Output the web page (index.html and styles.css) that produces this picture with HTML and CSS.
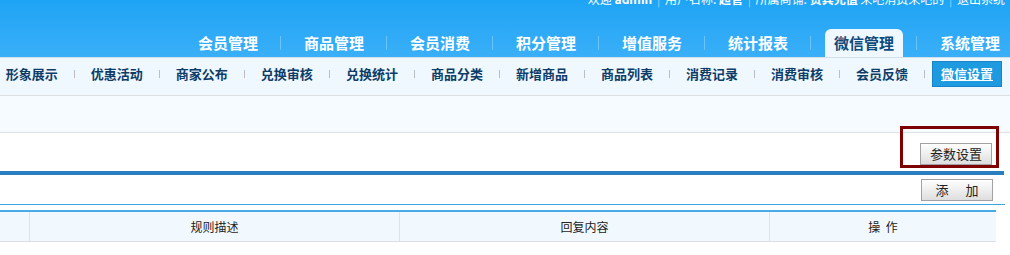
FILE: index.html
```html
<!DOCTYPE html>
<html>
<head>
  <meta charset="utf-8">
  <title>微信设置</title>
  <link rel="stylesheet" href="styles.css">
</head>
<body>
  <div class="header">
    <div class="userbar">
      欢迎 <b>admin</b> <span class="bar">|</span> 用户名称: <b>超管</b> <span class="bar">|</span> 所属商铺: <b>贵宾充值</b> 来吧消费来吧的 <span class="bar">|</span> 退出系统
    </div>
    <ul class="mainnav">
      <li><a href="#">会员管理</a></li>
      <li><a href="#">商品管理</a></li>
      <li><a href="#">会员消费</a></li>
      <li><a href="#">积分管理</a></li>
      <li><a href="#">增值服务</a></li>
      <li><a href="#">统计报表</a></li>
      <li><a href="#" class="current">微信管理</a></li>
      <li><a href="#">系统管理</a></li>
    </ul>
  </div>

  <div class="subnav">
    <ul>
      <li><a href="#">形象展示</a></li>
      <li><a href="#">优惠活动</a></li>
      <li><a href="#">商家公布</a></li>
      <li><a href="#">兑换审核</a></li>
      <li><a href="#">兑换统计</a></li>
      <li><a href="#">商品分类</a></li>
      <li><a href="#">新增商品</a></li>
      <li><a href="#">商品列表</a></li>
      <li><a href="#">消费记录</a></li>
      <li><a href="#">消费审核</a></li>
      <li><a href="#">会员反馈</a></li>
      <li><a href="#" class="current">微信设置</a></li>
    </ul>
  </div>

  <div class="toolbar"></div>

  <div class="main">
    <div class="btn-row first">
      <span class="btn-wrap">
        <button class="btn">参数设置</button>
        <span class="highlight"></span>
      </span>
    </div>
    <div class="blue-bar"></div>

    <div class="btn-row add">
      <button class="btn spaced">添&emsp;加</button>
    </div>

    <table class="list">
      <tr>
        <th class="col-check"></th>
        <th class="col-rule">规则描述</th>
        <th class="col-reply">回复内容</th>
        <th class="col-op">操&nbsp;&nbsp;作</th>
      </tr>
    </table>
  </div>
</body>
</html>
```

FILE: styles.css
```css
body {
  margin: 0;
  padding: 0;
  width: 1010px;
  overflow: hidden;
  background-color: white;
  font-family: "Noto Sans CJK SC", "Liberation Sans", sans-serif;
  color: #222;
}

ul {
  list-style: none;
  margin: 0;
  padding: 0;
}

a {
  text-decoration: none;
}

/* шапка */
.header {
  height: 57px;
  overflow: hidden;
  background: linear-gradient(#1ea4f5, #3aaff8);
}

.userbar {
  height: 12px;
  line-height: 12px;
  margin-top: -7px;
  padding-right: 5px;
  text-align: right;
  font-size: 12px;
  color: white;
  white-space: nowrap;
}

.userbar .bar {
  margin: 0 2px;
  color: #9ad6fb;
}

.mainnav {
  display: flex;
  justify-content: flex-end;
  margin-top: 24px;
  padding-right: 1px;
  height: 28px;
}

.mainnav li {
  display: flex;
  align-items: center;
  flex-shrink: 0;
}

.mainnav li + li::before {
  content: "";
  width: 1px;
  height: 14px;
  background-color: #6cc5f9;
}

.mainnav a {
  display: block;
  height: 28px;
  line-height: 28px;
  margin: 0 13px 0 14px;
  padding: 0 9px;
  font-size: 15px;
  font-weight: bold;
  color: white;
}

.mainnav li:last-child a {
  margin-right: 0;
}

.mainnav a.current {
  position: relative;
  height: 29px;
  margin-bottom: -1px;
  background-color: #eef8fe;
  border-radius: 6px 6px 0 0;
  color: #0f4a7c;
}

/* подменю */
.subnav {
  height: 37px;
  border-top: 1px solid #cfe0ec;
  border-bottom: 1px solid #dde1e4;
  background-color: #eef8fe;
}

.subnav ul {
  display: flex;
  justify-content: flex-end;
  align-items: center;
  height: 26px;
  padding-top: 3px;
  padding-right: 1px;
}

.subnav li {
  display: flex;
  align-items: center;
  flex-shrink: 0;
}

.subnav li + li::before {
  content: "";
  width: 1px;
  height: 8px;
  background-color: #bdbdbd;
}

.subnav a {
  display: block;
  margin: 0 7px;
  padding: 0 8px;
  height: 24px;
  line-height: 24px;
  font-size: 13px;
  font-weight: bold;
  color: #0d3c68;
  border: 1px solid transparent;
}

.subnav a.current {
  background-color: #1d9ae0;
  border-color: #1784c8;
  color: white;
  text-decoration: underline;
}

.toolbar {
  height: 36px;
  border-bottom: 1px solid #dde1e4;
  background-color: #f5fbfe;
}

/* содержимое */
.main {
  width: 1004px;
}

.btn-row {
  display: flex;
  justify-content: flex-end;
  padding-right: 12px;
}

.btn-row.first {
  padding-top: 10px;
  height: 28px;
}

.btn-row.add {
  padding-top: 4px;
  height: 25px;
  border-bottom: 1px solid #3ba4e4;
  margin-right: -1px;
}

.btn-wrap {
  position: relative;
  display: block;
  height: 22px;
}

.btn {
  display: block;
  width: 72px;
  height: 22px;
  padding: 0;
  border: 1px solid #a2a2a2;
  background: linear-gradient(#ffffff, #dedede);
  font-family: "Noto Sans CJK SC", sans-serif;
  font-size: 13px;
  line-height: 20px;
  color: #222;
}

.btn.spaced {
  letter-spacing: 2px;
  padding-left: 2px;
}

.highlight {
  position: absolute;
  top: -17px;
  left: -20px;
  right: -7px;
  bottom: -3px;
  border: 3px solid #7f0000;
}

.blue-bar {
  height: 4px;
  background-color: #2a7fc1;
}

.list {
  margin-top: 5px;
  width: 993px;
  table-layout: fixed;
  border-collapse: collapse;
  border-top: 2px solid #49aae8;
}

.list th {
  height: 29px;
  padding: 0;
  background-color: #f1f9fe;
  border-bottom: 1px solid #dcdfe2;
  border-left: 1px solid #e0e3e5;
  font-size: 12px;
  font-weight: normal;
  color: #222;
}

.list th:first-child {
  border-left: none;
}

.col-check { width: 29px; }
.col-rule { width: 369px; }
.col-reply { width: 369px; }
.col-op { width: 226px; }
```
